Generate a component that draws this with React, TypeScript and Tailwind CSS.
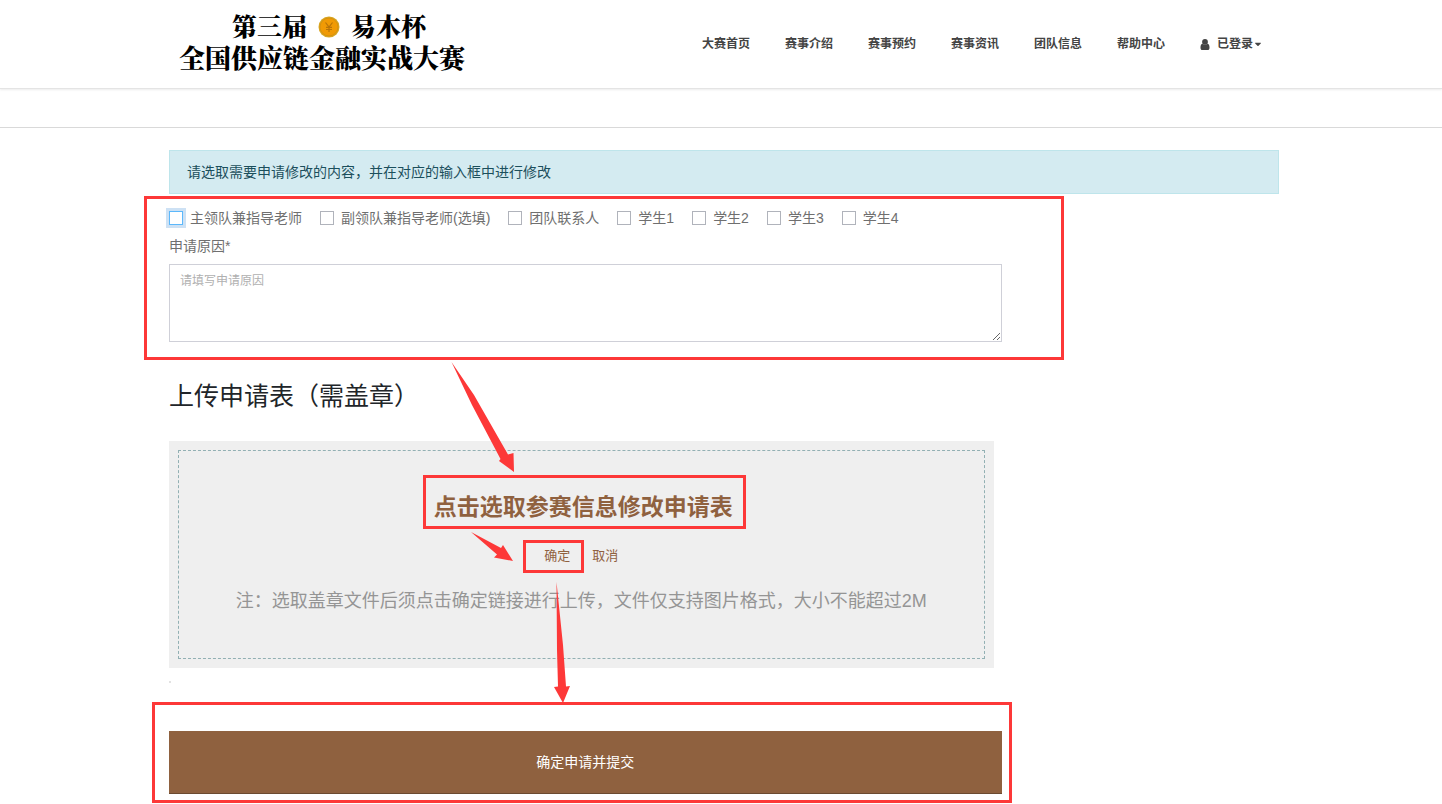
import { FaCaretDown } from "react-icons/fa"

const navItems = ["大赛首页", "赛事介绍", "赛事预约", "赛事资讯", "团队信息", "帮助中心"]

const targets = [
  { id: "leader", label: "主领队兼指导老师", active: true },
  { id: "deputy", label: "副领队兼指导老师(选填)" },
  { id: "contact", label: "团队联系人" },
  { id: "student1", label: "学生1" },
  { id: "student2", label: "学生2" },
  { id: "student3", label: "学生3" },
  { id: "student4", label: "学生4" },
]

function Coin() {
  return (
    <svg viewBox="0 0 22 22" className="mt-[2px] size-[22px]" aria-hidden="true">
      <circle cx="11" cy="11" r="10.5" fill="#d9a520" />
      <circle cx="11" cy="11" r="9" fill="#f09a05" stroke="#c98a10" strokeWidth="0.6" />
      <path d="M7.5 6.5 11 11l3.5-4.5M11 11v5M8 11.3h6M8 13.5h6" fill="none" stroke="#b87408" strokeWidth="1.2" />
    </svg>
  )
}

function UserIcon() {
  return (
    <svg viewBox="0 0 10 11" className="mr-[7px] h-[11px] w-[10px]" fill="currentColor" aria-hidden="true">
      <circle cx="5" cy="2.900" r="2.900" />
      <path d="M2.300 4.700C.8 5.200.5 7 .5 8.700.5 10.200 1.200 11 2.400 11h5.200c1.200 0 1.900-.8 1.900-2.300 0-1.700-.3-3.500-1.800-4-1.400 1.500-4 1.500-5.400 0Z" />
    </svg>
  )
}

function Logo() {
  return (
    <a
      href="#"
      className="ml-[10px] flex flex-col items-center pb-[6px] font-['Noto_Serif_CJK_SC','Noto_Sans_CJK_SC',serif] leading-[31px] font-black text-black"
    >
      <span className="flex items-center gap-[11px] pl-[14px] text-[25px]">
        <span>第三届</span>
        <Coin />
        <span>易木杯</span>
      </span>
      <span className="text-[26px]">全国供应链金融实战大赛</span>
    </a>
  )
}

function Header() {
  return (
    <header className="border-b border-[#e4e4e4] shadow-[0_1px_2px_rgba(0,0,0,0.08)]">
      <div className="mx-auto flex h-[88px] max-w-[1116px] items-center pl-[6px]">
        <Logo />
        <nav className="ml-auto mr-4 flex items-center gap-[35px] text-xs font-bold text-[#444]">
          {navItems.map((item) => (
            <a key={item} href="#">{item}</a>
          ))}
          <a href="#" className="flex items-center">
            <UserIcon />
            已登录
            <FaCaretDown className="size-[10px]" />
          </a>
        </nav>
      </div>
    </header>
  )
}

// step by step guide drawn over the form
function Guide() {
  return (
    <svg
      className="pointer-events-none absolute left-[6px] top-0 h-[676px] w-[1110px] overflow-visible"
      viewBox="169 128 1110 676"
      aria-hidden="true"
    >
      <g fill="none" stroke="#fd3838" strokeWidth="3">
        <rect x="145.5" y="197.5" width="917" height="161" />
        <rect x="424.5" y="476.5" width="320" height="51" />
        <rect x="524.5" y="541.5" width="58" height="30" />
        <rect x="153.5" y="703.5" width="857" height="98" />
      </g>
      <g fill="#fd3838">
        <path d="M451.500 362 474 395 508 454.500 513.500 453 514 472 499 461 500.500 459 472 405Z" />
        <path d="M471 532 501 548 503 545 513 561 494 557.500 497 554.500Z" />
        <path d="M556.500 582 563 645 566 686.500 570 686 563 703 554 687 558 686.500 557 650Z" />
      </g>
    </svg>
  )
}

export default function App() {
  return (
    <div className="bg-white font-['Liberation_Sans','Noto_Sans_CJK_SC',sans-serif] text-sm text-[#6f6f6f]">
      <Header />
      <div className="h-[39px] border-b border-[#d9d9d9]" />

      <main className="relative mx-auto max-w-[1116px] pl-[6px] pt-[22px] pb-[10px]">
        <div className="flex h-11 items-center border border-[#bee5eb] bg-[#d4ebf1] px-[17px] text-[#1b4f5c]">
          请选取需要申请修改的内容，并在对应的输入框中进行修改
        </div>

        <form onSubmit={(e) => e.preventDefault()}>
          <div className="mt-[10px] flex h-7 items-center gap-[18px]">
            {targets.map(({ id, label, active }) => (
              <label key={id} htmlFor={id} className="flex items-center gap-[7px]">
                <input
                  id={id}
                  type="checkbox"
                  className={
                    active
                      ? "size-[14px] appearance-none border border-[#5cb8fb] bg-white ring-3 ring-[#cde1f4] checked:bg-[#5cb8fb]"
                      : "size-[14px] appearance-none border border-[#b0b3bb] bg-white checked:bg-[#5cb8fb]"
                  }
                />
                {label}
              </label>
            ))}
          </div>

          <div className="w-3/4">
            <label htmlFor="reason" className="block leading-7">申请原因*</label>
            <textarea
              id="reason"
              placeholder="请填写申请原因"
              className="mt-1 block h-[78px] w-full border border-[#cfd0d8] px-[10px] py-[6px] text-xs leading-5 placeholder:text-[#b0b0b0]"
            />

            <h2 className="mt-[39px] text-[25px] leading-[30px] text-[#212529]">上传申请表（需盖章）</h2>

            <div className="mr-2 mt-[30px] bg-[#efefef] p-[9px]">
              <div className="flex flex-col items-center border border-dashed border-[#92b0b3] pt-[39px] pb-[43px]">
                <button type="button" className="pl-1 text-[23px] leading-[35px] font-bold text-[#8f613f]">
                  点击选取参赛信息修改申请表
                </button>
                <div className="mt-[21px] flex gap-[22px] text-[13px] leading-5 text-[#8f613f]">
                  <a href="#">确定</a>
                  <a href="#">取消</a>
                </div>
                <p className="mt-[21px] text-lg leading-7 text-[#959595]">
                  注：选取盖章文件后须点击确定链接进行上传，文件仅支持图片格式，大小不能超过2M
                </p>
              </div>
            </div>

            <div className="mt-[13px] size-[2px] bg-[#e2e2e2]" />

            <button
              type="submit"
              className="mt-12 block h-[63px] w-full border-b border-[#6b4a31] bg-[#8f613f] text-white"
            >
              确定申请并提交
            </button>
          </div>
        </form>

        <Guide />
      </main>
    </div>
  )
}
